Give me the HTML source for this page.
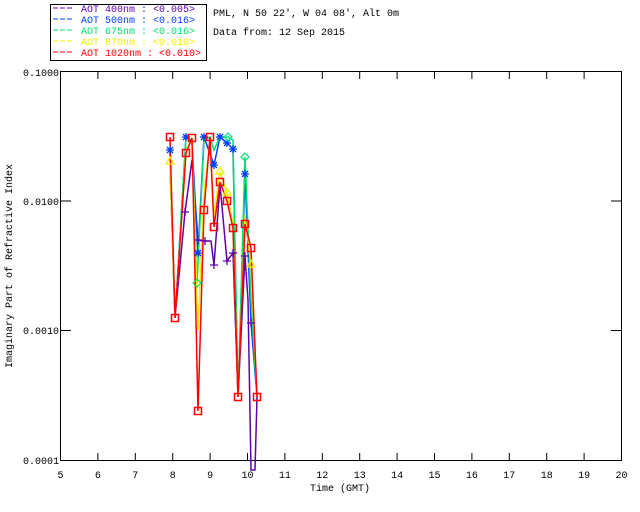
<!DOCTYPE html>
<html><head><meta charset="utf-8"><style>
html,body{margin:0;padding:0;background:#fff;}
svg{display:block;font-family:"Liberation Mono",monospace;}
</style></head><body>
<svg width="640" height="512" viewBox="0 0 640 512" xmlns="http://www.w3.org/2000/svg">
<rect width="640" height="512" fill="#fff"/>
<!-- legend -->
<rect x="50.5" y="4.5" width="156" height="56" fill="none" stroke="#000"/>
<g font-size="10" xml:space="preserve">
<line x1="53" y1="8" x2="74" y2="8" stroke="#6000b0" stroke-dasharray="5,2"/>
<text x="81" y="12" fill="#6000b0">AOT  400nm : &lt;0.005&gt;</text>
<line x1="53" y1="19" x2="74" y2="19" stroke="#0040ff" stroke-dasharray="5,2"/>
<text x="81" y="23" fill="#0040ff">AOT  500nm : &lt;0.016&gt;</text>
<line x1="53" y1="30" x2="74" y2="30" stroke="#00e070" stroke-dasharray="5,2"/>
<text x="81" y="34" fill="#00e070">AOT  675nm : &lt;0.016&gt;</text>
<line x1="53" y1="41" x2="74" y2="41" stroke="#f0f000" stroke-dasharray="5,2"/>
<text x="81" y="45" fill="#f0f000">AOT  870nm : &lt;0.010&gt;</text>
<line x1="53" y1="52" x2="74" y2="52" stroke="#ff0000" stroke-dasharray="5,2"/>
<text x="81" y="56" fill="#ff0000">AOT 1020nm : &lt;0.010&gt;</text>
</g>
<g font-size="10" fill="#000">
<text x="213" y="16">PML, N 50 22', W 04 08', Alt 0m</text>
<text x="213" y="35">Data from: 12 Sep 2015</text>
</g>
<!-- axes -->
<rect x="60.5" y="71.5" width="561" height="389" fill="none" stroke="#000"/>
<g stroke="#000">
<line x1="97.9" y1="461" x2="97.9" y2="453"/><line x1="135.3" y1="461" x2="135.3" y2="453"/><line x1="172.7" y1="461" x2="172.7" y2="453"/><line x1="210.1" y1="461" x2="210.1" y2="453"/><line x1="247.5" y1="461" x2="247.5" y2="453"/><line x1="284.9" y1="461" x2="284.9" y2="453"/><line x1="322.3" y1="461" x2="322.3" y2="453"/><line x1="359.7" y1="461" x2="359.7" y2="453"/><line x1="397.1" y1="461" x2="397.1" y2="453"/><line x1="434.5" y1="461" x2="434.5" y2="453"/><line x1="471.9" y1="461" x2="471.9" y2="453"/><line x1="509.3" y1="461" x2="509.3" y2="453"/><line x1="546.7" y1="461" x2="546.7" y2="453"/><line x1="584.1" y1="461" x2="584.1" y2="453"/>
<line x1="97.9" y1="71" x2="97.9" y2="79"/><line x1="135.3" y1="71" x2="135.3" y2="79"/><line x1="172.7" y1="71" x2="172.7" y2="79"/><line x1="210.1" y1="71" x2="210.1" y2="79"/><line x1="247.5" y1="71" x2="247.5" y2="79"/><line x1="284.9" y1="71" x2="284.9" y2="79"/><line x1="322.3" y1="71" x2="322.3" y2="79"/><line x1="359.7" y1="71" x2="359.7" y2="79"/><line x1="397.1" y1="71" x2="397.1" y2="79"/><line x1="434.5" y1="71" x2="434.5" y2="79"/><line x1="471.9" y1="71" x2="471.9" y2="79"/><line x1="509.3" y1="71" x2="509.3" y2="79"/><line x1="546.7" y1="71" x2="546.7" y2="79"/><line x1="584.1" y1="71" x2="584.1" y2="79"/>
<line x1="60" y1="201" x2="71" y2="201"/><line x1="60" y1="330.5" x2="71" y2="330.5"/>
<line x1="611" y1="201" x2="622" y2="201"/><line x1="611" y1="330.5" x2="622" y2="330.5"/>
</g>
<g font-size="10" fill="#000" text-anchor="end">
<text x="59" y="76">0.1000</text><text x="59" y="205">0.0100</text><text x="59" y="334">0.0010</text><text x="59" y="464">0.0001</text>
</g>
<g font-size="10" fill="#000" text-anchor="middle">
<text x="60.5" y="478">5</text><text x="97.9" y="478">6</text><text x="135.3" y="478">7</text><text x="172.7" y="478">8</text><text x="210.1" y="478">9</text><text x="247.5" y="478">10</text><text x="284.9" y="478">11</text><text x="322.3" y="478">12</text><text x="359.7" y="478">13</text><text x="397.1" y="478">14</text><text x="434.5" y="478">15</text><text x="471.9" y="478">16</text><text x="509.3" y="478">17</text><text x="546.7" y="478">18</text><text x="584.1" y="478">19</text><text x="621.5" y="478">20</text>
<text x="340" y="491">Time (GMT)</text>
</g>
<text font-size="10" fill="#000" text-anchor="middle" transform="translate(12,266) rotate(-90)">Imaginary Part of Refractive Index</text>
<!-- data -->
<g fill="none" stroke-width="1.5">
<polyline stroke="#6000b0" points="170,165 175,318 185,212 192,160 198,240 205,241 211,241 214,265 220,185 227,261 233,253 238,397 245,256 248,300 251,470 255,470 257,397"/>
<polyline stroke="#0040ff" points="170,150 175,318 186,137 192,142 198,253 204,137 214,165 220,137 227,143 233,149 238,397 245,174 251,323 257,397"/>
<polyline stroke="#00e070" points="170,160 175,318 186,137 192,140 197,283 204,140 210,137 214,150 220,137 228,137 233,140 238,397 245,157 251,300 257,397"/>
<polyline stroke="#f0f000" points="170,162 175,318 186,150 192,140 198,330 204,195 210,140 214,215 220,172 227,193 233,225 238,397 245,215 251,265 257,397"/>
<polyline stroke="#ff0000" points="170,137 175,318 186,153 192,138 198,411 204,210 210,137 214,227 220,182 227,201 233,228 238,397 245,224 251,248 257,397"/>
</g>
<g stroke="#6000b0" stroke-width="1.3">
<path d="M181,212h8M185,208v8M194,240h8M198,236v8M201,241h8M205,237v8M210,265h8M214,261v8M223,261h8M227,257v8M229,253h8M233,249v8M241,256h8M245,252v8M247,323h8M251,319v8"/>
</g>
<g stroke="#0040ff" stroke-width="1.3">
<path d="M166,150h8M170,146v8M167,147l6,6M173,147l-6,6 M182,137h8M186,133v8M183,134l6,6M189,134l-6,6 M194,253h8M198,249v8M195,250l6,6M201,250l-6,6 M200,137h8M204,133v8M201,134l6,6M207,134l-6,6 M210,165h8M214,161v8M211,162l6,6M217,162l-6,6 M216,137h8M220,133v8M217,134l6,6M223,134l-6,6 M223,143h8M227,139v8M224,140l6,6M230,140l-6,6 M229,149h8M233,145v8M230,146l6,6M236,146l-6,6 M241,174h8M245,170v8M242,171l6,6M248,171l-6,6"/>
</g>
<g stroke="#00e070" stroke-width="1.2" fill="none">
<path d="M228,133l4,4-4,4-4-4z M245,153l4,4-4,4-4-4z M197,279l4,4-4,4-4-4z"/>
</g>
<g stroke="#f0f000" stroke-width="1.3" fill="none">
<path d="M170,157l4,7h-8z M220,167l4,7h-8z M227,188l4,7h-8z M251,260l4,7h-8z"/>
</g>
<g stroke="#ff0000" stroke-width="1.5" fill="none">
<rect x="166.5" y="133.5" width="7" height="7"/><rect x="171.5" y="314.5" width="7" height="7"/><rect x="182.5" y="149.5" width="7" height="7"/><rect x="188.5" y="134.5" width="7" height="7"/><rect x="194.5" y="407.5" width="7" height="7"/><rect x="200.5" y="206.5" width="7" height="7"/><rect x="206.5" y="133.5" width="7" height="7"/><rect x="210.5" y="223.5" width="7" height="7"/><rect x="216.5" y="178.5" width="7" height="7"/><rect x="223.5" y="197.5" width="7" height="7"/><rect x="229.5" y="224.5" width="7" height="7"/><rect x="234.5" y="393.5" width="7" height="7"/><rect x="241.5" y="220.5" width="7" height="7"/><rect x="247.5" y="244.5" width="7" height="7"/><rect x="253.5" y="393.5" width="7" height="7"/>
</g>
</svg>
</body></html>
